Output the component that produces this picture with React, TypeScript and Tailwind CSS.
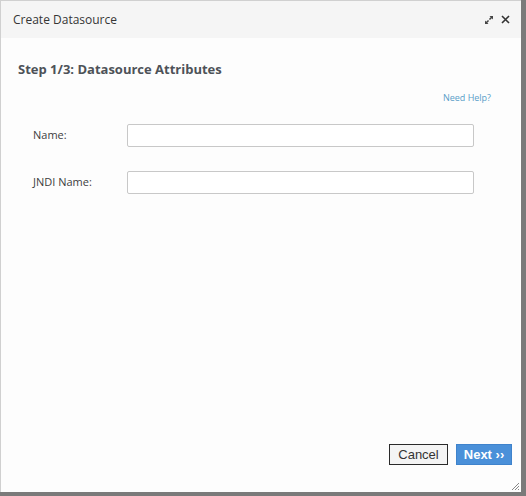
const App = () => {
  return (
    <div className="w-[526px] h-[496px] bg-[#7a7a7a] overflow-hidden">
      <div className="w-[521px] h-[492px] bg-[#fdfdfd] flex flex-col border-l border-t border-[#d0d0d0] relative">
        <div className="h-[37px] bg-[#f5f5f5] flex items-center justify-between pl-[12px] pr-[11px] shrink-0">
          <span className="text-[12px] text-[#363636] font-['Open_Sans',sans-serif]">Create Datasource</span>
          <div className="flex items-center gap-[8px] text-[#363636]">
            <svg width="8" height="8" viewBox="0 0 8 8" fill="#444">
              <path d="M4.5 0 H8 V3.5 L6.8 2.3 L5 4.1 L3.9 3 L5.7 1.2 Z" />
              <path d="M0 8 V4.5 L1.2 5.7 L3 3.9 L4.1 5 L2.3 6.8 L3.5 8 Z" />
            </svg>
            <svg width="9" height="9" viewBox="0 0 9 9" stroke="#333" strokeWidth="1.6">
              <path d="M1 1 L8 8 M8 1 L1 8" />
            </svg>
          </div>
        </div>
        <div className="flex-1 flex flex-col px-[17px] font-['Open_Sans',sans-serif]">
          <h2 className="mt-[21px] text-[13px] font-bold text-[#4d5258] leading-[20px]">Step 1/3: Datasource Attributes</h2>
          <div className="flex justify-end mt-[12px] pr-[13px]">
            <span className="text-[9px] text-[#5a9ec8]">Need Help?</span>
          </div>
          <div className="flex flex-col gap-[24px] mt-[19px] pl-[15px]">
            <div className="flex items-center">
              <label className="w-[94px] text-[11px] text-[#3d3d3d]">Name:</label>
              <input className="w-[347px] h-[23px] border border-[#c8c8c8] rounded-[2px] bg-white" />
            </div>
            <div className="flex items-center">
              <label className="w-[94px] text-[11px] text-[#3d3d3d]">JNDI Name:</label>
              <input className="w-[347px] h-[23px] border border-[#c8c8c8] rounded-[2px] bg-white" />
            </div>
          </div>
          <div className="flex-1" />
          <div className="flex justify-end gap-[8px] mb-[27px] mr-[-8px] font-['Liberation_Sans',sans-serif]">
            <button className="w-[59px] h-[21px] border border-[#2a2a2a] bg-[#f4f4f4] text-[13px] text-[#333] leading-none">Cancel</button>
            <button className="w-[56px] h-[21px] bg-[#4a90d9] border border-[#3f83cc] text-white text-[13px] font-bold leading-none">Next ››</button>
          </div>
        </div>
        <svg className="absolute right-[1px] bottom-[1px]" width="10" height="10" viewBox="0 0 10 10" stroke="#888" strokeWidth="1">
          <path d="M9 2 L2 9 M9 5 L5 9 M9 8 L8 9" />
        </svg>
      </div>
    </div>
  );
};

export default App;
